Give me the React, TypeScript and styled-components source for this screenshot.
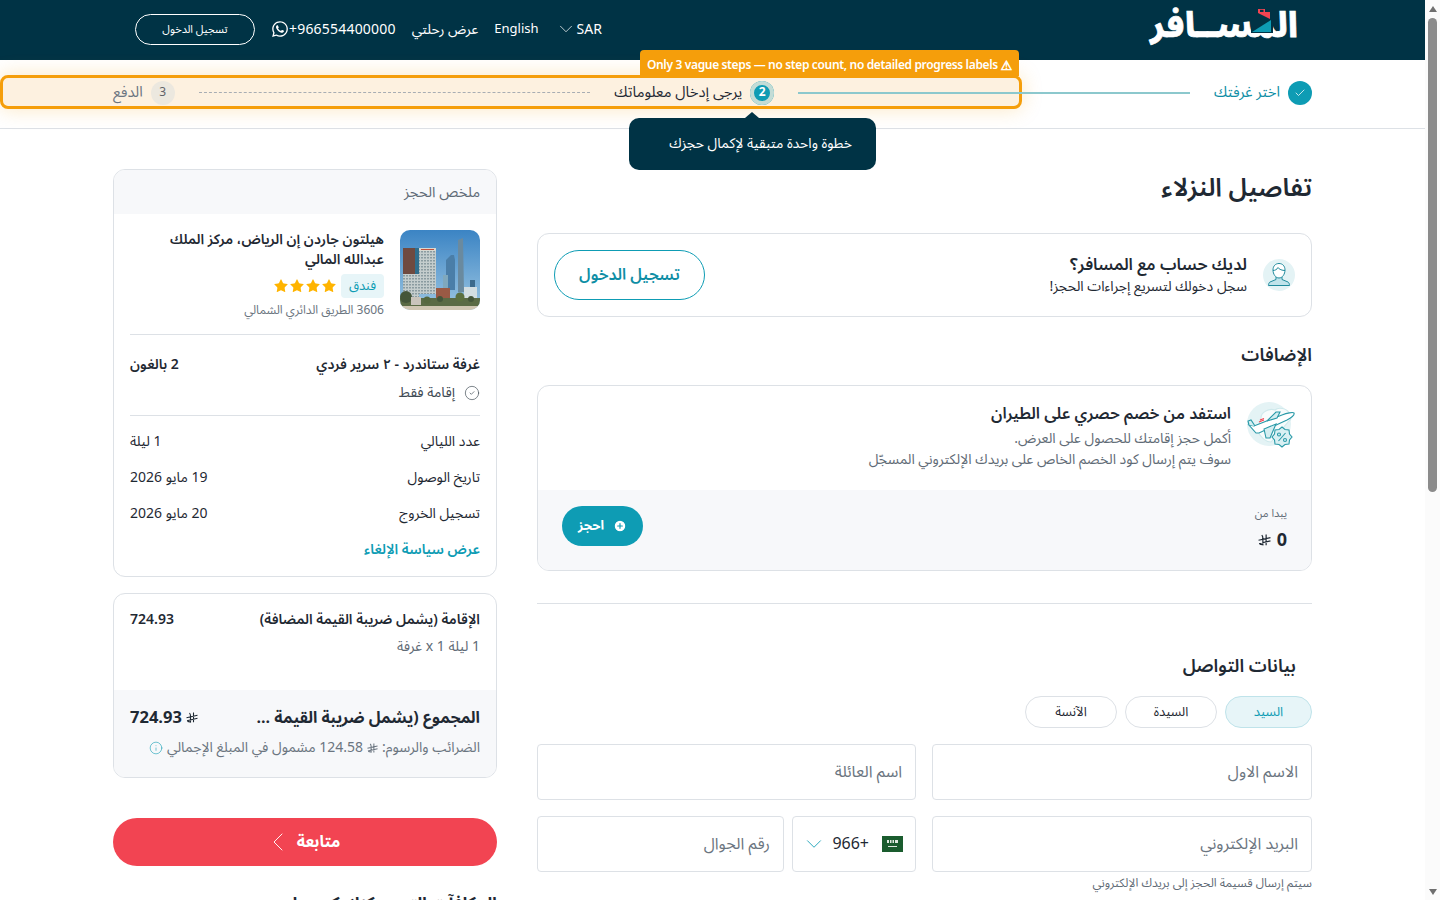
import React from "react";
import styled, { createGlobalStyle } from "styled-components";
import { Check, ChevronDown, ChevronLeft, CircleCheck, Info, PlusCircle, Star } from "lucide-react";
import { FaWhatsapp } from "react-icons/fa";

const Global = createGlobalStyle`
  body {
    margin: 0;
    background: #fff;
    color: #1f2933;
    font-family: "Noto Sans Arabic", "Noto Sans", "DejaVu Sans", sans-serif;
  }
  * { box-sizing: border-box; }
`;

const Page = styled.div`
  direction: rtl;
  position: relative;
  width: 1425px;
  min-height: 1640px;
`;

const ScrollTrack = styled.div`
  position: fixed;
  top: 0;
  right: 0;
  bottom: 0;
  width: 15px;
  background: #fbfbfb;
  display: flex;
  flex-direction: column;
  align-items: center;
  justify-content: space-between;
  padding: 6px 0 5px;
  z-index: 10;
`;
const ScrollArrow = styled.span<{ $down?: boolean }>`
  width: 0;
  height: 0;
  border-left: 4px solid transparent;
  border-right: 4px solid transparent;
  border-bottom: ${(p) => (p.$down ? "0" : "6px solid #6f6f6f")};
  border-top: ${(p) => (p.$down ? "6px solid #6f6f6f" : "0")};
`;
const ScrollThumb = styled.span`
  position: absolute;
  top: 18px;
  left: 3px;
  width: 9px;
  height: 474px;
  border-radius: 5px;
  background: #8b8b8b;
`;

const Header = styled.header`
  height: 60px;
  background: #003345;
  color: #fff;
  display: flex;
  align-items: center;
  justify-content: space-between;
  padding: 0 127px 0 135px;
`;
const Logo = styled.div`
  position: relative;
  width: 150px;
  height: 40px;
  margin-top: -9px;
  font-size: 35px;
  font-weight: 800;
  line-height: 40px;
  white-space: nowrap;
  -webkit-text-stroke: 0.7px #fff;
`;
const LogoMark = styled.svg`
  position: absolute;
  top: 2px;
  right: 25px;
`;
const HeaderMenu = styled.div`
  display: flex;
  align-items: center;
  gap: 16px;
  margin-top: -2px;
  font-size: 14px;
`;
const MenuItem = styled.span<{ $small?: boolean }>`
  display: flex;
  align-items: center;
  font-size: ${(p) => (p.$small ? "13px" : "14px")};
`;
const Phone = styled.span`
  direction: ltr;
  display: flex;
  align-items: center;
  font-size: 14px;
  letter-spacing: 0.2px;
`;
const LoginButton = styled.button`
  width: 120px;
  height: 31px;
  border: 1px solid #fff;
  border-radius: 16px;
  background: transparent;
  color: #fff;
  font: inherit;
  font-size: 11px;
`;

const Stepper = styled.div`
  height: 69px;
  border-bottom: 1px solid #dde1e6;
  padding: 0 113px 3px;
  display: flex;
  align-items: center;
  position: relative;
`;
const Step = styled.div<{ $tone?: string }>`
  display: flex;
  align-items: center;
  gap: 8px;
  font-size: 14.8px;
  position: relative;
  z-index: 3;
  white-space: nowrap;
  color: ${(p) => p.$tone || "#1f2933"};
`;
const StepDot = styled.span<{ $state: "done" | "active" | "todo" }>`
  width: 24px;
  height: 24px;
  border-radius: 50%;
  display: flex;
  align-items: center;
  justify-content: center;
  font-size: 12px;
  background: ${(p) => (p.$state === "todo" ? "#ece8df" : "#0e9cb4")};
  color: ${(p) => (p.$state === "todo" ? "#5f6368" : "#fff")};
  box-shadow: ${(p) => (p.$state === "active" ? "inset 0 0 0 4px #c3dcd6" : "none")};
  font-weight: ${(p) => (p.$state === "active" ? 700 : 400)};
`;
const StepLine = styled.div<{ $dashed?: boolean }>`
  flex: 1;
  margin: 0 24px;
  position: relative;
  z-index: 3;
  border-top: ${(p) => (p.$dashed ? "1px dashed #a8adb3" : "2px solid #8cc8cd")};
`;
const Highlight = styled.div`
  position: absolute;
  top: 15px;
  left: 0;
  width: 1022px;
  height: 34px;
  border: 3px solid #f59e0b;
  border-radius: 8px;
  background: #fdf1e0;
  box-shadow: 0 0 20px rgba(245, 158, 11, 0.25);
  z-index: 2;
`;
const HighlightBadge = styled.div`
  position: absolute;
  top: -10px;
  left: 640px;
  width: 379px;
  height: 26px;
  padding-top: 5px;
  z-index: 4;
  direction: ltr;
  background: #f59e0b;
  color: #fff;
  border-radius: 4px 4px 0 0;
  font-size: 12px;
  font-weight: 600;
  letter-spacing: -0.35px;
  display: flex;
  align-items: center;
  justify-content: center;
  gap: 3px;
  white-space: nowrap;
`;
const WarnGlyph = styled.span`
  font-family: "DejaVu Sans", sans-serif;
  font-size: 13px;
  font-weight: 700;
  -webkit-text-stroke: 0.5px #fff;
`;
const Tooltip = styled.div`
  position: absolute;
  top: 58px;
  left: 629px;
  width: 247px;
  height: 52px;
  z-index: 5;
  background: #003345;
  color: #fff;
  border-radius: 10px;
  font-size: 14px;
  display: flex;
  align-items: center;
  padding: 0 24px 2px 0;
  white-space: nowrap;
  &::before {
    content: "";
    position: absolute;
    top: -6px;
    right: 117px;
    border: 7px solid transparent;
    border-top: 0;
    border-bottom: 6px solid #003345;
  }
`;

const Main = styled.main`
  display: grid;
  grid-template-columns: 775px 384px;
  gap: 40px;
  padding: 40px 113px;
  align-items: start;
`;
const Column = styled.div`
  display: flex;
  flex-direction: column;
`;
const PageTitle = styled.h1`
  margin: 0 0 26px;
  font-size: 25.500px;
  font-weight: 600;
  line-height: 38px;
`;
const Card = styled.section`
  border: 1px solid #dde1e6;
  border-radius: 12px;
  background: #fff;
  overflow: hidden;
`;
const AccountCard = styled(Card)`
  height: 84px;
  padding: 0 16px;
  display: flex;
  align-items: center;
  gap: 16px;
`;
const AccountText = styled.div`
  flex: 1;
`;
const AccountTitle = styled.div`
  font-size: 16.500px;
  font-weight: 600;
  line-height: 24px;
`;
const AccountSub = styled.div`
  font-size: 14px;
  line-height: 20px;
`;
const OutlineButton = styled.button`
  width: 151px;
  height: 50px;
  border: 1px solid #0e9cb4;
  border-radius: 25px;
  background: #fff;
  color: #0e8ea5;
  font: inherit;
  font-size: 16px;
  font-weight: 600;
`;
const SectionTitle = styled.h2`
  margin: 25px 0 17px;
  font-size: 18px;
  font-weight: 600;
  line-height: 26px;
`;
const OfferTop = styled.div`
  height: 104px;
  padding: 16px 16px 0;
  display: flex;
  gap: 16px;
`;
const OfferText = styled.div`
  margin-top: -1px;
`;
const OfferTitle = styled.div`
  font-size: 16px;
  font-weight: 600;
  line-height: 26px;
  margin-bottom: 1px;
`;
const OfferLine = styled.div`
  font-size: 14px;
  color: #5f6b76;
  line-height: 21px;
`;
const OfferBottom = styled.div`
  height: 80px;
  background: #f7f8fa;
  padding: 15px 24px 0;
  display: flex;
  align-items: flex-start;
  justify-content: space-between;
`;
const FromLabel = styled.div`
  font-size: 11px;
  color: #5f6b76;
  line-height: 18px;
`;
const FromPrice = styled.div`
  display: flex;
  align-items: center;
  gap: 6px;
  margin-top: 2px;
  font-size: 18px;
  font-weight: 700;
  line-height: 30px;
`;
const BookButton = styled.button`
  width: 81px;
  height: 40px;
  margin-top: 1px;
  border: 0;
  border-radius: 20px;
  background: #0e9cb4;
  color: #fff;
  font: inherit;
  font-size: 13px;
  font-weight: 700;
  display: flex;
  align-items: center;
  justify-content: center;
  gap: 9px;
`;
const Divider = styled.hr`
  width: 100%;
  border: 0;
  border-top: 1px solid #dde1e6;
  margin: 32px 0 0;
`;
const ContactBlock = styled.div`
  padding-top: 46px;
  display: flex;
  flex-direction: column;
`;
const ContactTitle = styled.h2`
  margin: 0 16px 14px 0;
  font-size: 18px;
  font-weight: 600;
  line-height: 32px;
`;
const Chips = styled.div`
  display: flex;
  gap: 8px;
  margin-bottom: 16px;
`;
const Chip = styled.span<{ $on?: boolean }>`
  width: ${(p) => (p.$on ? "87px" : "92px")};
  height: 32px;
  border-radius: 16px;
  border: 1px solid ${(p) => (p.$on ? "#bfe3ea" : "#dde1e6")};
  background: ${(p) => (p.$on ? "#e7f5f8" : "#fff")};
  color: ${(p) => (p.$on ? "#0e9cb4" : "#1f2933")};
  font-size: 13px;
  display: flex;
  align-items: center;
  justify-content: center;
`;
const FieldGrid = styled.div`
  display: grid;
  grid-template-columns: 380px 379px;
  gap: 16px;
`;
const Field = styled.div`
  height: 56px;
  border: 1px solid #dde1e6;
  border-radius: 4px;
  padding: 0 13px;
  font-size: 16px;
  color: #6b7580;
  display: flex;
  align-items: center;
`;
const PhoneRow = styled.div`
  display: grid;
  grid-template-columns: 124px 247px;
  gap: 8px;
  align-self: start;
`;
const CodeField = styled(Field)`
  justify-content: space-between;
  color: #1f2933;
  padding: 0 12px 0 8px;
`;
const CodeFlag = styled.span`
  display: flex;
  align-items: center;
  gap: 13px;
`;
const Hint = styled.div`
  font-size: 12px;
  color: #5f6b76;
  line-height: 24px;
`;

const SummaryHead = styled.div`
  height: 44px;
  background: #f7f8fa;
  padding: 0 16px;
  display: flex;
  align-items: center;
  font-size: 14.500px;
  color: #5f6b76;
`;
const SummaryBody = styled.div`
  padding: 16px 16px 16px;
`;
const HotelRow = styled.div`
  display: flex;
  gap: 16px;
  padding-bottom: 14px;
  border-bottom: 1px solid #dde1e6;
`;
const HotelImage = styled.svg`
  flex: none;
  border-radius: 10px;
`;
const HotelName = styled.div`
  font-size: 14px;
  font-weight: 600;
  line-height: 20px;
`;
const HotelMeta = styled.div`
  display: flex;
  align-items: center;
  gap: 4px;
  margin: 4px 0 4px;
`;
const TypeTag = styled.span`
  height: 24px;
  width: 43px;
  border-radius: 4px;
  background: #e7f5f8;
  color: #0e9cb4;
  font-size: 13px;
  display: flex;
  align-items: center;
  justify-content: center;
`;
const Stars = styled.span`
  display: flex;
  color: #ffb400;
`;
const Address = styled.div`
  font-size: 12px;
  color: #6b7580;
  line-height: 18px;
`;
const Line = styled.div`
  display: flex;
  justify-content: space-between;
  align-items: center;
  font-size: 14px;
  line-height: 20px;
`;
const RoomBlock = styled.div`
  padding: 20px 0 12px;
  border-bottom: 1px solid #dde1e6;
`;
const RoomLine = styled(Line)`
  font-weight: 600;
`;
const Perk = styled.div`
  display: flex;
  align-items: center;
  gap: 9px;
  margin-top: 8px;
  font-size: 14px;
  line-height: 20px;
  color: #3d4852;
`;
const StayBlock = styled.div`
  padding-top: 16px;
  display: flex;
  flex-direction: column;
  gap: 16px;
`;
const CancelLink = styled.a`
  font-size: 14px;
  font-weight: 600;
  color: #0e9cb4;
  line-height: 20px;
`;
const PriceCard = styled(Card)`
  margin-top: 16px;
`;
const PriceBody = styled.div`
  height: 96px;
  padding: 16px 16px 0;
`;
const PriceNote = styled.div`
  margin-top: 7px;
  font-size: 14px;
  line-height: 20px;
  color: #5f6b76;
`;
const PriceFoot = styled.div`
  height: 87px;
  background: #f7f8fa;
  padding: 16px 16px 0;
`;
const TotalLine = styled(Line)`
  font-size: 16px;
  font-weight: 700;
  line-height: 24px;
`;
const Amount = styled.span`
  display: flex;
  align-items: center;
  gap: 4px;
  font-size: 16.500px;
`;
const TaxNote = styled.div`
  margin-top: 8px;
  display: flex;
  align-items: center;
  gap: 4px;
  font-size: 14px;
  line-height: 20px;
  color: #6b7580;
  white-space: nowrap;
`;
const ContinueButton = styled.button`
  margin-top: 40px;
  height: 48px;
  border: 0;
  border-radius: 24px;
  padding: 0 8px 0 0;
  background: #f24452;
  color: #fff;
  font: inherit;
  font-size: 16px;
  font-weight: 700;
  display: flex;
  align-items: center;
  justify-content: center;
  gap: 3px;
`;
const RewardTitle = styled.div`
  margin-top: 26px;
  font-size: 17px;
  font-weight: 700;
  line-height: 24px;
  height: 60px;
`;

const Riyal = ({ size = 12 }: { size?: number }) => (
  <svg width={size} height={size} viewBox="0 0 12 12" fill="none" stroke="currentColor" strokeWidth="1.1">
    <path d="M3.500 1c.7.8 1 1.700 1 3v6l-3-.6M7.500 .5v9.800M.5 5.800l11-2.500M1 8.800l10.500-2.500" />
  </svg>
);

const UserIcon = () => (
  <svg width="32" height="32" viewBox="0 0 32 32" fill="none" stroke="#1f8a9c" strokeWidth="1">
    <circle cx="16" cy="16" r="16" fill="#e4f3f5" stroke="none" />
    <path d="M13 18v2.500l-6 2.500c-1 .5-1.500 2-1.500 3.500h21c0-1.500-.5-3-1.500-3.500l-6-2.500V18" fill="#bfe3ea" />
    <path d="M10 11c0-4 2.500-6.500 6-6.500s6 2.500 6 6.500c0 4-2.500 8-6 8s-6-4-6-8z" fill="#fff" />
    <path d="M10 11.500c2 0 4-1 5-3 1 2 4.500 3 7 3" />
  </svg>
);

const PlaneIcon = () => (
  <svg width="48" height="48" viewBox="0 0 48 48" fill="none" stroke="#2a9aa8" strokeWidth="1.1">
    <circle cx="22" cy="22" r="22" fill="#e4f3f5" stroke="none" />
    <path d="M14 16c0-6 8-10 14-8 3-3 12-2 14 3 3 2 3 6 0 8L24 40c-6 0-10-4-14-12z" fill="#f7fcfc" stroke="#cfe9ec" />
    <path d="M2 23l5 1 28-11c5-2 11-3 12-2 1 2-3 5-7 7L12 31l-3 0z" fill="#fff" />
    <path d="M20 19l9-9h4l-3 6z" fill="#d4eef1" />
    <path d="M17 27l2 9h4l6-14z" fill="#d4eef1" />
    <path d="M2 23l-1-4 3-1 4 6" fill="#d4eef1" />
    <path d="M12 20l5-2M13 18l4-1.500" stroke="#f24452" />
    <path d="M35 25l3 2.500 4 .5 .5 4 2.500 3-2.500 3-.5 4-4 .5-3 2.500-3-2.500-4-.5-.5-4-2.500-3 2.500-3 .5-4 4-.5z" fill="#d9f0f3" />
    <path d="M31.500 39l7-8" />
    <circle cx="32" cy="32.500" r="1.500" />
    <circle cx="38" cy="38" r="1.500" />
  </svg>
);

const Flag = () => (
  <svg width="21" height="16" viewBox="0 0 21 16">
    <rect width="21" height="16" fill="#1a5c2e" />
    <path d="M5 4h2v3H5zM8 4h1.500v3H8zM10.500 4H12v3h-1.500zM13 4h3v3h-3z" fill="#dfe9e0" />
    <rect x="6" y="10" width="9" height="1" fill="#dfe9e0" />
  </svg>
);

const HotelPicture = () => (
  <HotelImage width="80" height="80" viewBox="0 0 80 80">
    <defs>
      <linearGradient id="sky" x1="0" y1="0" x2="0" y2="1">
        <stop offset="0" stopColor="#3b84c4" />
        <stop offset="1" stopColor="#9cc6e2" />
      </linearGradient>
      <pattern id="win" width="3" height="3" patternUnits="userSpaceOnUse">
        <rect width="3" height="3" fill="#c4cdcd" />
        <rect width="2" height="1.500" fill="#8a9ba0" />
      </pattern>
    </defs>
    <rect width="80" height="80" fill="url(#sky)" />
    <path d="M58 10l5-2 1 54h-6z" fill="#6a8a9f" />
    <path d="M46 30l5-5h3l1 5v30h-9z" fill="#4a7ea8" />
    <path d="M43 45h5v15h-5z" fill="#7fa8bd" />
    <rect x="70" y="50" width="5" height="10" fill="#3d6a8c" />
    <rect x="64" y="57" width="13" height="11" fill="#d3dee2" />
    <rect x="3" y="18" width="12" height="26" fill="#6f4a40" />
    <rect x="15" y="18" width="4" height="28" fill="#2f6d8c" />
    <rect x="3" y="44" width="16" height="24" fill="url(#win)" />
    <rect x="19" y="18" width="17" height="46" fill="url(#win)" />
    <rect x="19" y="18" width="17" height="3" fill="#d8d8d0" />
    <rect x="21" y="19" width="13" height="1" fill="#c4503a" />
    <rect x="36" y="58" width="14" height="10" fill="#9a5a45" />
    <rect x="0" y="68" width="80" height="8" fill="#5a6b45" />
    <circle cx="6" cy="67" r="6" fill="#44563a" />
    <rect x="11" y="67" width="10" height="8" fill="#c9c4bb" />
    <circle cx="27" cy="70" r="3.500" fill="#55683f" />
    <circle cx="40" cy="69" r="3" fill="#44563a" />
    <circle cx="60" cy="67" r="4.500" fill="#5b7040" />
    <circle cx="71" cy="69" r="3" fill="#44563a" />
    <rect x="0" y="76" width="80" height="4" fill="#cfc6b2" />
  </HotelImage>
);

export default function App() {
  return (
    <Page>
      <Global />
      <ScrollTrack>
        <ScrollArrow />
        <ScrollThumb />
        <ScrollArrow $down />
      </ScrollTrack>
      <Header>
        <Logo>
          المســافر
          <LogoMark width="22" height="25" viewBox="0 0 22 25">
            <rect width="22" height="25" fill="#003345" />
            <path d="M7 1h7v3h5v7L7 5z" fill="#f24452" />
            <path d="M9 1.800h3.500V4H9z" fill="#003345" />
            <path d="M1 24L20 12v12z" fill="#0e9cb4" />
          </LogoMark>
        </Logo>
        <HeaderMenu>
          <MenuItem>
            SAR
            <ChevronDown size={22} strokeWidth={0.8} />
          </MenuItem>
          <MenuItem $small>English</MenuItem>
          <MenuItem>عرض رحلتي</MenuItem>
          <Phone>
            <FaWhatsapp size={18} />
            +966554400000
          </Phone>
          <LoginButton>تسجيل الدخول</LoginButton>
        </HeaderMenu>
      </Header>

      <Stepper>
        <Highlight />
        <HighlightBadge>
          Only 3 vague steps — no step count, no detailed progress labels
          <WarnGlyph>⚠</WarnGlyph>
        </HighlightBadge>
        <Tooltip>خطوة واحدة متبقية لإكمال حجزك</Tooltip>
        <Step $tone="#0e8ea5">
          <StepDot $state="done">
            <Check size={12} strokeWidth={1.5} />
          </StepDot>
          اختر غرفتك
        </Step>
        <StepLine />
        <Step>
          <StepDot $state="active">2</StepDot>
          يرجى إدخال معلوماتك
        </Step>
        <StepLine $dashed />
        <Step $tone="#6b7580">
          <StepDot $state="todo">3</StepDot>
          الدفع
        </Step>
      </Stepper>

      <Main>
        <Column>
          <PageTitle>تفاصيل النزلاء</PageTitle>
          <AccountCard>
            <UserIcon />
            <AccountText>
              <AccountTitle>لديك حساب مع المسافر؟</AccountTitle>
              <AccountSub>سجل دخولك لتسريع إجراءات الحجز!</AccountSub>
            </AccountText>
            <OutlineButton>تسجيل الدخول</OutlineButton>
          </AccountCard>

          <SectionTitle>الإضافات</SectionTitle>
          <Card>
            <OfferTop>
              <PlaneIcon />
              <OfferText>
                <OfferTitle>استفد من خصم حصري على الطيران</OfferTitle>
                <OfferLine>أكمل حجز إقامتك للحصول على العرض.</OfferLine>
                <OfferLine>سوف يتم إرسال كود الخصم الخاص على بريدك الإلكتروني المسجّل</OfferLine>
              </OfferText>
            </OfferTop>
            <OfferBottom>
              <div>
                <FromLabel>يبدا من</FromLabel>
                <FromPrice>
                  0<Riyal size={13} />
                </FromPrice>
              </div>
              <BookButton>
                <PlusCircle size={14} fill="#fff" stroke="#0e9cb4" />
                احجز
              </BookButton>
            </OfferBottom>
          </Card>
          <Divider />

          <ContactBlock>
            <ContactTitle>بيانات التواصل</ContactTitle>
            <Chips>
              <Chip $on>السيد</Chip>
              <Chip>السيدة</Chip>
              <Chip>الآنسة</Chip>
            </Chips>
            <FieldGrid>
              <Field>الاسم الاول</Field>
              <Field>اسم العائلة</Field>
              <div>
                <Field>البريد الإلكتروني</Field>
                <Hint>سيتم إرسال قسيمة الحجز إلى بريدك الإلكتروني</Hint>
              </div>
              <PhoneRow>
                <CodeField>
                  <CodeFlag>
                    <Flag />
                    <span>+966</span>
                  </CodeFlag>
                  <ChevronDown size={26} strokeWidth={0.8} color="#0e9cb4" />
                </CodeField>
                <Field>رقم الجوال</Field>
              </PhoneRow>
            </FieldGrid>
          </ContactBlock>
        </Column>

        <Column>
          <Card>
            <SummaryHead>ملخص الحجز</SummaryHead>
            <SummaryBody>
              <HotelRow>
                <HotelPicture />
                <div>
                  <HotelName>هيلتون جاردن إن الرياض، مركز الملك عبدالله المالي</HotelName>
                  <HotelMeta>
                    <TypeTag>فندق</TypeTag>
                    <Stars>
                      {[0, 1, 2, 3].map((i) => (
                        <Star key={i} size={16} fill="currentColor" strokeWidth={0} />
                      ))}
                    </Stars>
                  </HotelMeta>
                  <Address>3606 الطريق الدائري الشمالي</Address>
                </div>
              </HotelRow>
              <RoomBlock>
                <RoomLine>
                  <span>غرفة ستاندرد - ٢ سرير فردي</span>
                  <span>2 بالغون</span>
                </RoomLine>
                <Perk>
                  <CircleCheck size={16} strokeWidth={1} />
                  إقامة فقط
                </Perk>
              </RoomBlock>
              <StayBlock>
                <Line>
                  <span>عدد الليالي</span>
                  <span>1 ليلة</span>
                </Line>
                <Line>
                  <span>تاريخ الوصول</span>
                  <span>19 مايو 2026</span>
                </Line>
                <Line>
                  <span>تسجيل الخروج</span>
                  <span>20 مايو 2026</span>
                </Line>
                <CancelLink>عرض سياسة الإلغاء</CancelLink>
              </StayBlock>
            </SummaryBody>
          </Card>

          <PriceCard>
            <PriceBody>
              <RoomLine>
                <span>الإقامة (يشمل ضريبة القيمة المضافة)</span>
                <span>724.93</span>
              </RoomLine>
              <PriceNote>1 ليلة x 1 غرفة</PriceNote>
            </PriceBody>
            <PriceFoot>
              <TotalLine>
                <span>المجموع (يشمل ضريبة القيمة ...</span>
                <Amount>
                  <Riyal />
                  724.93
                </Amount>
              </TotalLine>
              <TaxNote>
                الضرائب والرسوم: <Riyal size={11} /> 124.58 مشمول في المبلغ الإجمالي
                <Info size={14} strokeWidth={1} color="#0e9cb4" />
              </TaxNote>
            </PriceFoot>
          </PriceCard>

          <ContinueButton>
            متابعة
            <ChevronLeft size={32} strokeWidth={0.7} />
          </ContinueButton>
          <RewardTitle>المكافآت التي يمكنك كسبها</RewardTitle>
        </Column>
      </Main>
    </Page>
  );
}
